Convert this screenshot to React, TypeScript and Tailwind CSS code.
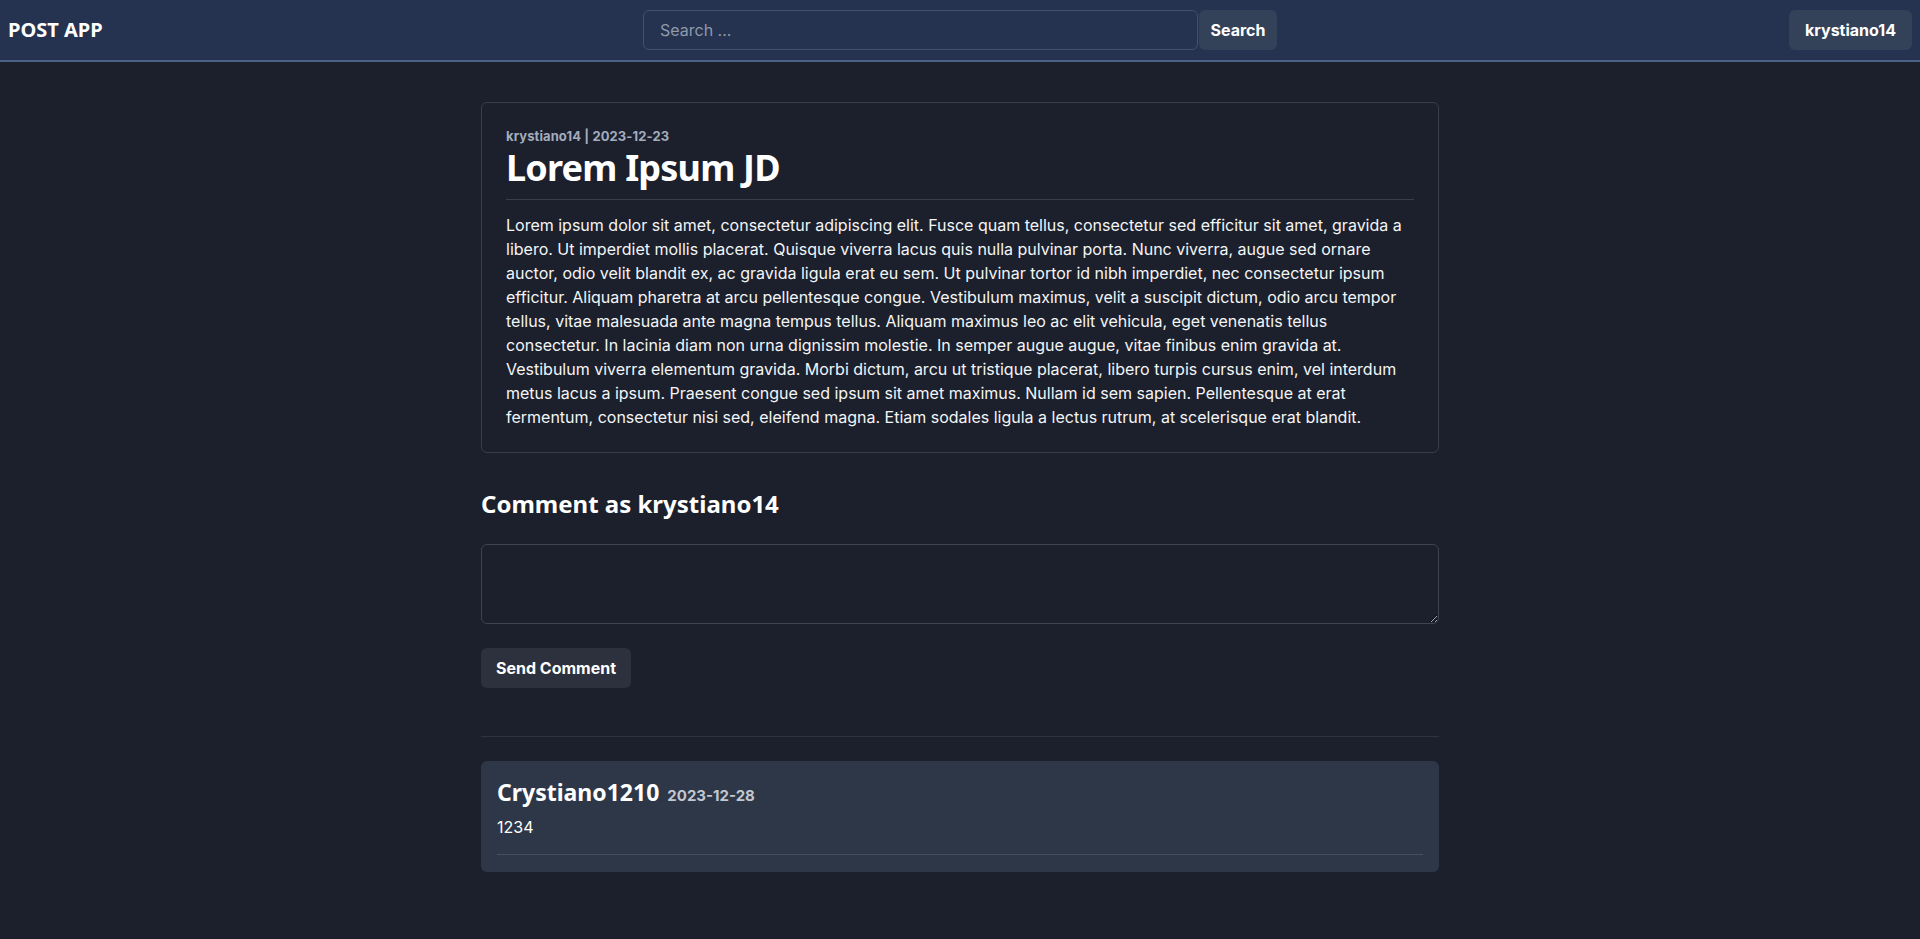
import React from "react";

const body =
  "Lorem ipsum dolor sit amet, consectetur adipiscing elit. Fusce quam tellus, consectetur sed efficitur sit amet, gravida a libero. Ut imperdiet mollis placerat. Quisque viverra lacus quis nulla pulvinar porta. Nunc viverra, augue sed ornare auctor, odio velit blandit ex, ac gravida ligula erat eu sem. Ut pulvinar tortor id nibh imperdiet, nec consectetur ipsum efficitur. Aliquam pharetra at arcu pellentesque congue. Vestibulum maximus, velit a suscipit dictum, odio arcu tempor tellus, vitae malesuada ante magna tempus tellus. Aliquam maximus leo ac elit vehicula, eget venenatis tellus consectetur. In lacinia diam non urna dignissim molestie. In semper augue augue, vitae finibus enim gravida at. Vestibulum viverra elementum gravida. Morbi dictum, arcu ut tristique placerat, libero turpis cursus enim, vel interdum metus lacus a ipsum. Praesent congue sed ipsum sit amet maximus. Nullam id sem sapien. Pellentesque at erat fermentum, consectetur nisi sed, eleifend magna. Etiam sodales ligula a lectus rutrum, at scelerisque erat blandit.";

export default function App() {
  return (
    <div className="min-h-[939px] bg-[#1b202c] text-[#f1f3f5] font-['Inter',sans-serif]">
      <header className="h-[62px] bg-[#253350] border-b-2 border-[#4a6285] grid grid-cols-[1fr_auto_1fr] items-center pl-[8px] pr-[8px]">
        <div className="font-['Noto_Sans',sans-serif] font-bold text-[20px] text-white">
          POST APP
        </div>
        <div className="flex items-center">
          <input
            className="w-[555px] h-[40px] rounded-[6px] border border-[#43516b] bg-[#253350] px-[16px] text-[16px] text-white placeholder:text-[#8f9aab] outline-none"
            placeholder="Search ..."
          />
          <button className="h-[40px] w-[78px] ml-[1px] rounded-[6px] bg-[#334259] text-[16px] font-bold text-white">
            Search
          </button>
        </div>
        <div className="flex justify-end">
          <button className="h-[40px] w-[123px] rounded-[6px] bg-[#334259] text-[16px] font-bold text-white">
            krystiano14
          </button>
        </div>
      </header>

      <main className="w-[958px] mx-auto pt-[40px] pb-[40px]">
        <article className="border border-[#373d4a] rounded-[6px] px-[24px] pt-[23px] pb-[23px]">
          <div className="text-[13px] leading-[20px] font-bold text-[#a3acbd] tracking-[0.1px]">krystiano14 | 2023-12-23</div>
          <h1 className="font-['Noto_Sans',sans-serif] font-bold text-[36px] leading-[44px] text-white tracking-[-0.8px] pb-[9px] border-b border-[#373d4a]">
            Lorem Ipsum JD
          </h1>
          <p className="mt-[13px] text-[16px] leading-[24px] text-[#f4f5f7]">{body}</p>
        </article>

        <h2 className="mt-[35px] font-['Noto_Sans',sans-serif] font-bold text-[24px] leading-[32px] text-white">
          Comment as krystiano14
        </h2>
        <textarea className="block mt-[24px] w-full h-[80px] rounded-[6px] border border-[#3d4350] bg-[#1b202c] p-[10px] text-[15px] text-white outline-none" />
        <button className="block mt-[24px] h-[40px] w-[150px] rounded-[6px] bg-[#2d313d] text-[16px] font-bold text-white">
          Send Comment
        </button>

        <div className="mt-[48px] border-t border-[#2d3340]" />

        <div className="mt-[24px] bg-[#2e3748] rounded-[6px] px-[16px] pt-[17px] pb-[17px]">
          <div className="flex items-baseline gap-[8px] h-[28px]">
            <span className="font-['Noto_Sans',sans-serif] font-bold text-[23px] leading-[28px] text-white">Crystiano1210</span>
            <span className="text-[15px] font-bold text-[#c2c7d0]">2023-12-28</span>
          </div>
          <div className="mt-[10px] text-[16px] leading-[22px] text-white">1234</div>
          <div className="mt-[16px] border-t border-[#454e5f]" />
        </div>
      </main>
    </div>
  );
}
